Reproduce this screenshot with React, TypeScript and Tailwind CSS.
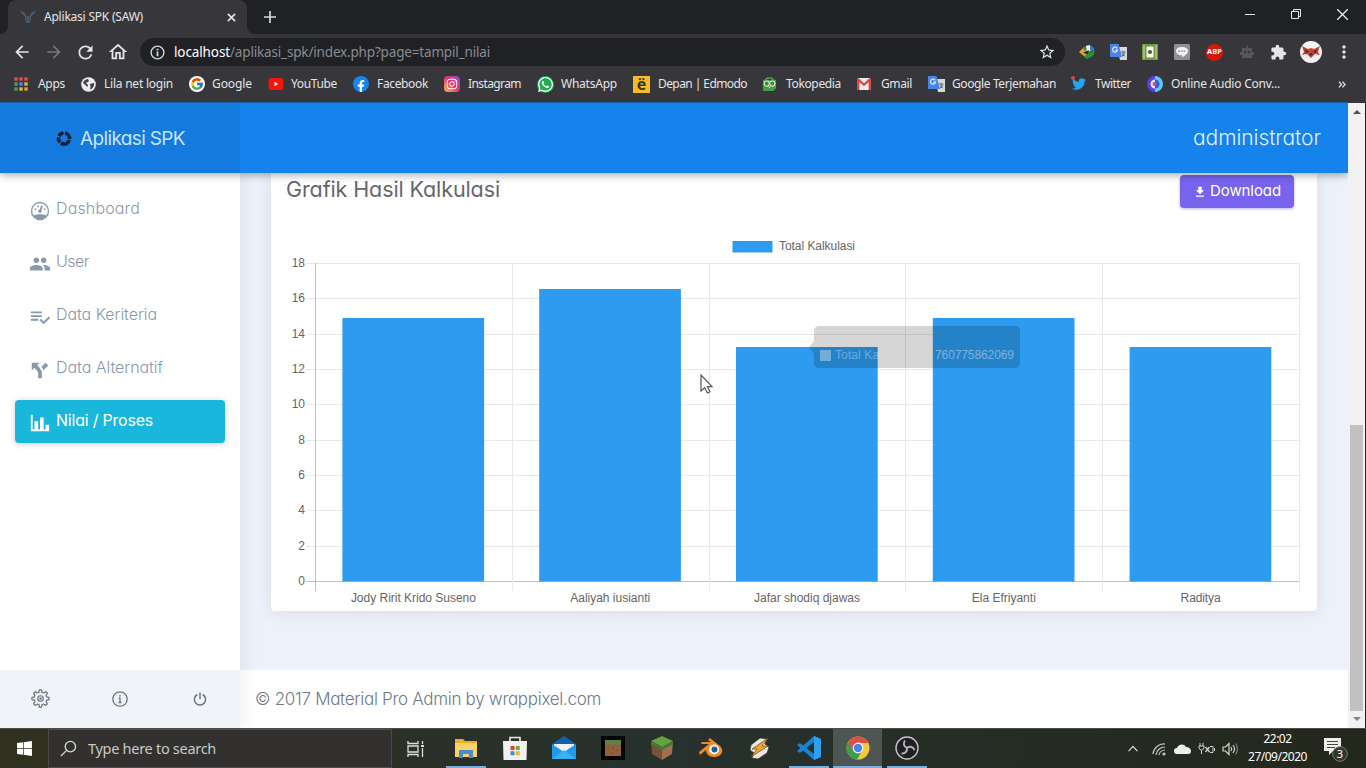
import React, { useLayoutEffect, useRef, useState } from "react";
import { FcGoogle } from "react-icons/fc";
import { FaFacebookF, FaInstagram, FaWhatsapp, FaTwitter, FaWindows } from "react-icons/fa";
import { MdStarBorder, MdArrowBack, MdArrowForward, MdRefresh, MdMoreVert, MdOutlineHome, MdExtension } from "react-icons/md";

const UI = "font-['Noto_Sans','Open_Sans',sans-serif]";
const POP = "font-['Inter',sans-serif] [font-feature-settings:'cv11','ss03']";

/** One line of text whose letter spacing is tuned so it spans `w` pixels. */
function Label({ w, children, className = "" }: { w: number; children: string; className?: string }) {
  const ref = useRef<HTMLSpanElement>(null);
  const [ls, setLs] = useState(0);
  useLayoutEffect(() => {
    if (ref.current) setLs((w - ref.current.getBoundingClientRect().width) / children.length);
  }, [w, children]);
  return (
    <span className={`block shrink-0 ${className}`} style={{ width: w }}>
      <span ref={ref} className="inline-block whitespace-nowrap" style={{ letterSpacing: ls }}>{children}</span>
    </span>
  );
}

function Mdi({ d, className = "" }: { d: string; className?: string }) {
  return (
    <svg viewBox="0 0 24 24" fill="currentColor" className={`shrink-0 ${className}`}>
      <path d={d} />
    </svg>
  );
}

function TranslateIcon() {
  return (
    <svg viewBox="0 0 18 18" className="h-[18px] w-[18px]">
      <path d="M7 4h10v13H10z" fill="#d5d8dc" />
      <path d="M10.500 9h5M13 7.800V9m1.800 0c-.5 2-1.800 3.300-3 4m.5-3c.6 1.500 1.500 2.300 2.500 3" stroke="#6f7680" strokeWidth="1.200" fill="none" />
      <path d="M0 1h8.500l3.500 13H0z" fill="#4a84e8" />
      <path d="M7.200 5.400A2.500 2.500 0 1 0 7.500 7.200H5.200" stroke="#dce8ff" strokeWidth="1.200" fill="none" />
    </svg>
  );
}

function AppsIcon() {
  const c = ["#e0503f", "#e0503f", "#e0503f", "#4a9b5d", "#4b87dc", "#e0b13c", "#4a9b5d", "#e0b13c", "#e0a33c"];
  return (
    <svg viewBox="0 0 14 14" className="h-[14px] w-[14px]">
      {c.map((f, i) => <rect key={i} x={(i % 3) * 5 + 0.3} y={Math.floor(i / 3) * 5 + 0.3} width="3.400" height="3.400" fill={f} />)}
    </svg>
  );
}

const bookmarks: { name: string; w: number; gap: string; icon: React.ReactNode; slot: string }[] = [
  { name: "Apps", w: 27, gap: "mr-[16px]", slot: "w-[24px]", icon: <AppsIcon /> },
  {
    name: "Lila net login", w: 69, gap: "mr-[16px]", slot: "w-[23px]",
    icon: (
      <svg viewBox="0 0 15 15" className="h-[15px] w-[15px]">
        <circle cx="7.500" cy="7.500" r="7.300" fill="#eceef0" />
        <path d="M2 6c1-3 3-4 5-4l1 2-2 1.500H4.500L7 8l-.5 2zM9 7l4-1c.5 3-1.500 6-4 6.500l.5-2.500z" fill="#3c4043" />
      </svg>
    ),
  },
  {
    name: "Google", w: 40, gap: "mr-[16px]", slot: "w-[23px]",
    icon: <span className="flex h-4 w-4 items-center justify-center rounded-full bg-white"><FcGoogle size={14} /></span>,
  },
  {
    name: "YouTube", w: 46, gap: "mr-[16px]", slot: "w-[23px]",
    icon: (
      <svg viewBox="0 0 16 12" className="h-[12px] w-[16px]">
        <rect x=".5" width="15" height="12" rx="3" fill="#f51408" />
        <path d="M6.500 3.700v4.600L10.200 6z" fill="#fff" />
      </svg>
    ),
  },
  {
    name: "Facebook", w: 51, gap: "mr-[16px]", slot: "w-[24px]",
    icon: <span className="flex h-4 w-4 items-end justify-center overflow-hidden rounded-full bg-[#1686ee] text-white"><FaFacebookF size={12} /></span>,
  },
  {
    name: "Instagram", w: 53, gap: "mr-[16px]", slot: "w-[24px]",
    icon: <span className="flex h-4 w-4 items-center justify-center rounded-[4px] bg-gradient-to-tr from-[#fdb04a] via-[#e2336f] to-[#8a3ac8] text-white"><FaInstagram size={12} /></span>,
  },
  {
    name: "WhatsApp", w: 56, gap: "mr-[16px]", slot: "w-[24px]",
    icon: <span className="flex h-[17px] w-[17px] items-center justify-center rounded-full bg-[#1fab50] text-white"><FaWhatsapp size={17} /></span>,
  },
  {
    name: "Depan | Edmodo", w: 89, gap: "mr-[15px]", slot: "w-[25px]",
    icon: <span className="flex h-[17px] w-[17px] items-center justify-center bg-[#f7bd23] text-[16px] leading-none font-bold text-[#3b3420]">ë</span>,
  },
  {
    name: "Tokopedia", w: 55, gap: "mr-[16px]", slot: "w-[24px]",
    icon: (
      <svg viewBox="0 0 16 16" className="h-[15px] w-[15px]">
        <path d="M1 3h14v9l-3 3H1z" fill="#459b46" />
        <path d="M4 3c1-3 7-3 8 0" stroke="#68b85b" strokeWidth="1.200" fill="none" />
        <circle cx="5" cy="7" r="2.800" fill="#3f8c40" stroke="#d6ebce" strokeWidth="1.200" />
        <circle cx="11" cy="7" r="2.800" fill="#3f8c40" stroke="#d6ebce" strokeWidth="1.200" />
        <path d="m6.500 10 1.500 2 1.500-2z" fill="#d6ebce" />
      </svg>
    ),
  },
  {
    name: "Gmail", w: 31, gap: "mr-[16px]", slot: "w-[24px]",
    icon: (
      <svg viewBox="0 0 14 12" className="h-[12px] w-[14px]">
        <path d="M0 0h14v12H0z" fill="#efeded" />
        <path d="M1.200 12V1.500L7 6.800l5.800-5.300V12" stroke="#d9443a" strokeWidth="2.300" fill="none" />
      </svg>
    ),
  },
  { name: "Google Terjemahan", w: 104, gap: "mr-[16px]", slot: "w-[24px]", icon: <TranslateIcon /> },
  {
    name: "Twitter", w: 36, gap: "mr-[16px]", slot: "w-[23px]",
    icon: <span className="relative text-[#2aa3ef]"><FaTwitter size={14} /><span className="absolute -top-[1px] -left-[1px] h-[4px] w-[4px] rounded-full bg-[#cf4660]" /></span>,
  },
  {
    name: "Online Audio Conv...", w: 109, gap: "", slot: "w-[24px]",
    icon: (
      <svg viewBox="0 0 16 16" className="h-[16px] w-[16px]">
        <path d="M8 0a8 8 0 0 0 0 16z" fill="#5b3fe8" />
        <path d="M8 0a8 8 0 0 1 0 16z" fill="#62c6f2" />
        <path d="M8 3.500a4.500 4.500 0 0 0 0 9z" fill="#dfe6ff" />
        <path d="M8 3.500a4.500 4.500 0 0 1 0 9z" fill="#2b5fe0" />
        <circle cx="7.500" cy="8" r="2" fill="#e2476d" />
      </svg>
    ),
  },
];

function Browser() {
  return (
    <div className={`${UI} flex h-[103px] shrink-0 flex-col bg-[#36363b] text-[#e4e5e8]`}>
      <div className="flex h-[34px] bg-[#202125]">
        <div className="flex w-2 items-end bg-[#36363b]"><div className="h-full w-full rounded-br-[8px] bg-[#202125]" /></div>
        <div className="flex w-[239px] items-center rounded-t-[8px] bg-[#36363b] pl-3">
          <svg viewBox="0 0 16 14" className="mr-2 h-[14px] w-4">
            <path d="M0 1c2.500 0 5 1 6 4v8l-1-3V7C4.500 5 1.500 4 0 1zM16 1c-2.500 0-5 1-6 4v8l1-3V7c.5-2 3.500-3 5-6zM6.500 6h3v7h-3z" fill="#4f5966" />
          </svg>
          <Label w={99} className="text-[12px]">Aplikasi SPK (SAW)</Label>
          <svg viewBox="0 0 10 10" className="ml-[84px] h-[9px] w-[9px]"><path d="m1 1 8 8M9 1 1 9" stroke="#e4e5e8" strokeWidth="1.800" /></svg>
        </div>
        <div className="w-2 bg-[#36363b]"><div className="h-full w-full rounded-bl-[8px] bg-[#202125]" /></div>
        <svg viewBox="0 0 12 12" className="mt-[11px] ml-[9px] h-3 w-3"><path d="M6 0v12M0 6h12" stroke="#d8d9dc" strokeWidth="1.700" /></svg>
        <div className="ml-auto flex items-start pt-[9px] pr-[18px]">
          <svg viewBox="0 0 10 10" className="mr-[36px] h-[10px] w-[10px]"><path d="M0 5.500h10" stroke="#e8e8ea" /></svg>
          <svg viewBox="0 0 10 10" className="mr-[36px] h-[10px] w-[10px]"><path d="M.5 2.500h7v7h-7zM2.500 2V.5h7v7H8" stroke="#e8e8ea" fill="none" /></svg>
          <svg viewBox="0 0 10 10" className="h-[11px] w-[11px]"><path d="m0 0 10 10M10 0 0 10" stroke="#e8e8ea" strokeWidth="1.200" /></svg>
        </div>
      </div>
      <div className="flex h-[36px] items-center pl-[12px]">
        <div className="flex w-[128px] items-center">
          <MdArrowBack size={20} className="mr-3" />
          <MdArrowForward size={20} className="mr-[11px] text-[#76777c]" />
          <MdRefresh size={21} className="mr-[11px]" />
          <MdOutlineHome size={22} />
        </div>
        <div className="flex h-[28px] w-[925px] items-center rounded-full bg-[#202125] pr-[9px] pl-[10px]">
          <svg viewBox="0 0 16 16" className="mr-[9px] h-[15px] w-[15px] shrink-0"><circle cx="8" cy="8" r="6.800" stroke="#d5d6d9" strokeWidth="1.500" fill="none" /><path d="M8 7v5M8 4v1.800" stroke="#d5d6d9" strokeWidth="1.900" /></svg>
          <Label w={56} className="text-[13.5px] text-white">localhost</Label>
          <Label w={260} className="text-[13.5px] text-[#8a8b90]">/aplikasi_spk/index.php?page=tampil_nilai</Label>
          <MdStarBorder size={18} className="ml-auto" />
        </div>
        <div className="ml-[13px] flex items-center">
          <svg viewBox="0 0 18 16" className="mr-[14px] h-[16px] w-[18px]">
            <path d="M1 8 6 3l5 5-4 5z" fill="#e2a12c" /><path d="m5 4 4-3 3 2-5 4z" fill="#2c8f3e" /><path d="m8 2 4-1 1 6-4 1z" fill="#f2f5ee" /><path d="m12 1 4 3v4l-4-2z" fill="#2c7bd2" /><path d="m6 13 3-4 8-2-2 5-6 3z" fill="#269436" /><path d="m5 9 6-3-1 4z" fill="#1c1c1c" />
          </svg>
          <span className="mr-[14px]"><TranslateIcon /></span>
          <svg viewBox="0 0 16 16" className="mr-4 h-4 w-4"><path d="M0 0h16v16H0z" fill="#739743" /><path d="M2 1v14M14 1v14" stroke="#c0d990" strokeWidth="1.200" /><rect x="4.500" y="2.500" width="7" height="11" rx="1" fill="#f4f8ee" /><circle cx="8" cy="8" r="2" fill="#39642e" /></svg>
          <svg viewBox="0 0 16 16" className="mr-4 h-4 w-4"><rect width="16" height="16" rx="1.500" fill="#919195" /><path d="M8 3c4 0 6 2 6 4.200 0 2.500-4 4.800-6 6v-2c-4 0-6-2-6-4S4 3 8 3z" fill="#f3f3f4" /><path d="M4 7.200h8" stroke="#8d8d91" strokeWidth="1.300" strokeDasharray="2 .7" /></svg>
          <span className="mr-4 flex h-[17px] w-[17px] items-center justify-center rounded-full bg-[#d71708] text-[7.5px] font-bold text-white">ABP</span>
          <svg viewBox="0 0 16 16" className="mr-[15px] h-4 w-4"><path d="M7.300 1h1.400v3H13v4h2v3h-2v3H3v-3H1V8h2V4h4.300z" fill="#56575c" /><circle cx="6" cy="8" r="1.200" fill="#36363b" /><circle cx="10" cy="8" r="1.200" fill="#36363b" /></svg>
          <MdExtension size={17} className="mr-[13px]" />
          <svg viewBox="0 0 22 22" className="mr-[12px] h-[22px] w-[22px]"><circle cx="11" cy="11" r="11" fill="#f5f2f1" /><path d="m2 5 6 3 3-1 3 1 6-3-2 6 2 3-5-1-4 4-4-4-5 1 2-3z" fill="#c24637" /><path d="m5 8 4 3-3 1zm12 0-4 3 3 1zM9 13l2 2 2-2-2-1z" fill="#4e292a" /></svg>
          <MdMoreVert size={20} />
        </div>
      </div>
      <div className="flex h-[28px] items-center pl-[14px]">
        {bookmarks.map((b) => (
          <div key={b.name} className={`flex shrink-0 items-center ${b.gap}`}>
            <span className={`${b.slot} flex shrink-0`}>{b.icon}</span>
            <Label w={b.w} className="text-[12px]">{b.name}</Label>
          </div>
        ))}
        <svg viewBox="0 0 9 8" className="mr-[20px] ml-auto h-[7px] w-[8px]"><path d="m1 .7 3 3.300-3 3.300M5 .7 8 4 5 7.300" stroke="#e4e5e8" strokeWidth="1.500" fill="none" /></svg>
      </div>
      <div className="mt-auto h-px w-[1348px] bg-[#1a5d9e]" />
    </div>
  );
}

const nav = [
  { name: "Dashboard", w: 84, d: "M12,2A10,10 0 0,0 2,12A10,10 0 0,0 12,22A10,10 0 0,0 22,12A10,10 0 0,0 12,2M12,3.500A8.500,8.500 0 0,1 20.500,12C20.500,14 19.800,15.600 18.800,17C17,16 14.500,15.500 12,15.500C9.500,15.500 7,16 5.200,17C4.200,15.600 3.500,14 3.500,12A8.500,8.500 0 0,1 12,3.500M14,5.890C13.620,5.900 13.260,6.150 13.100,6.540L11.810,9.770L11.710,10C11,10.130 10.410,10.600 10.140,11.260C9.730,12.290 10.230,13.450 11.260,13.860C12.290,14.270 13.450,13.770 13.860,12.740C14.120,12.080 14,11.320 13.570,10.760L13.670,10.500L14.960,7.290L14.970,7.260C15.170,6.750 14.920,6.170 14.410,5.960C14.280,5.910 14.150,5.890 14,5.890M10,6A1,1 0 0,0 9,7A1,1 0 0,0 10,8A1,1 0 0,0 11,7A1,1 0 0,0 10,6M7,9A1,1 0 0,0 6,10A1,1 0 0,0 7,11A1,1 0 0,0 8,10A1,1 0 0,0 7,9M17,9A1,1 0 0,0 16,10A1,1 0 0,0 17,11A1,1 0 0,0 18,10A1,1 0 0,0 17,9Z" },
  { name: "User", w: 33, d: "M16,13C15.710,13 15.380,13 15.030,13.050C16.190,13.890 17,15 17,16.500V19H23V16.500C23,14.170 18.330,13 16,13M8,13C5.670,13 1,14.170 1,16.500V19H15V16.500C15,14.170 10.330,13 8,13M8,11A3,3 0 0,0 11,8A3,3 0 0,0 8,5A3,3 0 0,0 5,8A3,3 0 0,0 8,11M16,11A3,3 0 0,0 19,8A3,3 0 0,0 16,5A3,3 0 0,0 13,8A3,3 0 0,0 16,11Z" },
  { name: "Data Keriteria", w: 101, d: "M14,10H2V12H14V10M14,6H2V8H14V6M2,16H10V14H2V16M21.500,11.500L23,13L16,20L11.500,15.500L13,14L16,17L21.500,11.500Z" },
  { name: "Data Alternatif", w: 107, d: "M3,4V12.500L6,9.500L9,13L10,15V21H14V14L12,10L9,6.500L11.500,4M18,4L13.540,8.470L14,9C14.930,10 15.450,11.210 15.780,12.380L21,7" },
  { name: "Nilai / Proses", w: 97, d: "M22,21H2V3H4V19H6V10H10V19H12V6H16V19H18V14H22V21Z" },
];

function Sidebar() {
  return (
    <aside className="z-[1] flex w-[240px] shrink-0 flex-col bg-white shadow-[1px_0_20px_rgba(0,0,0,0.08)]">
      <nav className="flex flex-1 flex-col gap-[10px] px-[15px] pt-[15px]">
        {nav.map((n, i) => (
          <div key={n.name} className={`flex h-[43px] items-center rounded-[4px] pl-[14px] ${i === 4 ? "bg-[#1ab7dd] text-white shadow-[0_1px_6px_rgba(0,0,0,0.2)]" : "text-[#8b98a9]"}`}>
            <Mdi d={n.d} className="mt-[2px] mr-[2px] h-[22px] w-[22px]" />
            <Label w={n.w} className={`ml-[3px] pb-[3px] text-[16px] leading-[24px] ${i === 4 ? "font-normal" : "font-light"}`}>{n.name}</Label>
          </div>
        ))}
      </nav>
      <div className="flex h-[58px] items-center bg-[#f0f4f8] pb-[2px] text-[#67757f]">
        <div className="flex w-20 justify-center">
          <svg viewBox="0 0 20 20" className="h-[19px] w-[19px]" fill="none" stroke="currentColor" strokeWidth="1.300" strokeLinejoin="round">
            <path d="M8.800 1h2.400l.4 2.600 1.700.6 2.200-1.500 1.800 1.800-1.500 2.200.7 1.700 2.500.4v2.400l-2.500.4-.7 1.700 1.500 2.200-1.800 1.800-2.200-1.500-1.700.6-.4 2.600H8.800l-.4-2.600-1.700-.6-2.200 1.500-1.800-1.800 1.500-2.200-.7-1.700L1 11.200V8.800l2.500-.4.7-1.700-1.500-2.200 1.800-1.800 2.200 1.500 1.700-.6z" />
            <circle cx="10" cy="10" r="2.900" /><circle cx="10" cy="10" r=".6" />
          </svg>
        </div>
        <div className="flex w-20 justify-center pt-[2px]">
          <svg viewBox="0 0 16 16" className="h-[16px] w-[16px]" fill="none" stroke="currentColor" strokeWidth="1.300"><circle cx="8" cy="8" r="7.200" /><path d="M6.800 7H8v4.500M6.500 11.500h3M8 4v1.500" /></svg>
        </div>
        <div className="flex w-20 justify-center pt-[2px]">
          <svg viewBox="0 0 14 14" className="h-[14px] w-[14px]" fill="none" stroke="currentColor" strokeWidth="1.500"><path d="M4.300 2.500a5.600 5.600 0 1 0 5.400 0M7 .5V7" /></svg>
        </div>
      </div>
    </aside>
  );
}

const data = [
  { name: "Jody Ririt Krido Suseno", w: 125, top: 318 },
  { name: "Aaliyah iusianti", w: 80, top: 289 },
  { name: "Jafar shodiq djawas", w: 106, top: 347 },
  { name: "Ela Efriyanti", w: 64, top: 318 },
  { name: "Raditya", w: 40, top: 347 },
];

function Chart() {
  return (
    <svg viewBox="271 212 1046 399" className="block h-[399px] w-[1046px] font-['Liberation_Sans',sans-serif] text-[12px]">
      <rect x="732.500" y="241" width="40" height="11.500" fill="#2c9bf0" />
      <text x="779" y="250" fill="#666" textLength="76">Total Kalkulasi</text>
      {Array.from({ length: 10 }, (_, i) => {
        const y = Math.round(263 + i * 35.35) + 0.5;
        return (
          <g key={i}>
            <path d={`M306 ${y}H1299.500`} stroke={i === 9 ? "#bfbfbf" : "#e8e8e8"} />
            <text x="305" y={y + 3} textAnchor="end" fill="#666">{18 - i * 2}</text>
          </g>
        );
      })}
      {Array.from({ length: 6 }, (_, i) => {
        const x = Math.round(315 + i * 196.8) + 0.5;
        return <path key={i} d={`M${x} 263V591`} stroke={i === 0 ? "#bfbfbf" : "#e8e8e8"} />;
      })}
      {data.map((d, i) => (
        <g key={d.name}>
          <rect x={342.4 + i * 196.8} y={d.top} width="141.700" height={581.500 - d.top} fill="#2c9bf0" />
          <text x={413.4 + i * 196.8 - d.w / 2} y="602" textLength={d.w} fill="#666">{d.name}</text>
        </g>
      ))}
      <g>
        <path d="M820 326h195q5 0 5 5v32q0 5-5 5H819q-5 0-5-5v-9l-5-7 5-6v-10q0-5 6-5z" fill="#000" opacity=".16" />
        <rect x="820" y="350" width="11" height="11" fill="#94bddd" opacity=".7" />
        <text x="835" y="359" fill="#cfe0f0" opacity=".42" textLength="53">Total Kalk</text>
        <text x="935" y="359" fill="#cfe0f0" opacity=".5" textLength="79">760775862069</text>
      </g>
      <path d="M701 375v16l3.700-3.300 2.700 5.300 2.600-1.300-2.600-5H712z" fill="#fff" stroke="#555" strokeWidth="1.200" />
    </svg>
  );
}

function Page() {
  return (
    <div className={`${POP} flex h-[625px] shrink-0`}>
      <div className="flex w-[1348px] flex-col overflow-hidden">
        <header className="relative z-10 flex h-[70px] shrink-0 items-center bg-[#1682ec] shadow-[0_2px_8px_rgba(0,0,0,0.35)]">
          <div className="flex h-full w-[240px] items-center bg-[#157add] pl-[56px]">
            <svg viewBox="0 0 16 16" className="mr-[8px] h-[17px] w-[16px]" fill="none" stroke="#07203a" strokeWidth="3.600">
              <path d="M9 2.600a5.500 5.500 0 0 1 4.500 6M13.200 9.800a5.500 5.500 0 0 1-8.300 2.800M4.100 11.800a5.500 5.500 0 0 1-1.500-5M3 5.600A5.500 5.500 0 0 1 7.500 2.500" />
            </svg>
            <Label w={105} className="pt-[2px] text-[19px] text-[#c6e4ff]">Aplikasi SPK</Label>
          </div>
          <Label w={128} className="mr-[27px] ml-auto text-[21px] font-light text-[#e1f1ff]">administrator</Label>
        </header>
        <div className="flex min-h-0 flex-1">
          <Sidebar />
          <main className="flex flex-1 flex-col bg-[#ecf1fa]">
            <div className="min-h-0 flex-1 pl-[31px]">
              <section className="w-[1046px] rounded-b-[4px] bg-white shadow-[0_1px_15px_rgba(69,65,78,0.12)]">
                <div className="flex h-[39px] items-start justify-between pr-[23px] pl-[15px]">
                  <Label w={214} className="pt-[1px] text-[21.5px] leading-[30px] text-[#65676d]">Grafik Hasil Kalkulasi</Label>
                  <div className="mt-[2px] flex h-[33px] w-[114px] items-center rounded-[4px] bg-[#7763ee] pl-[13px] text-white shadow-[0_1px_3px_rgba(80,60,200,0.4)]">
                    <Mdi d="M5,20H19V18H5M19,9H15V3H9V9H5L12,16L19,9Z" className="mr-[3px] h-[14px] w-[14px]" />
                    <Label w={71} className="text-[15px]">Download</Label>
                  </div>
                </div>
                <Chart />
              </section>
            </div>
            <footer className="flex h-[58px] items-center bg-white pt-px pl-[15px]">
              <Label w={346} className="text-[17px] font-light text-[#6d7a88]">© 2017 Material Pro Admin by wrappixel.com</Label>
            </footer>
          </main>
        </div>
      </div>
      <div className="flex w-[17px] flex-col items-center bg-[#f1f1f1]">
        <svg viewBox="0 0 8 4" className="mt-[7px] h-1 w-2"><path d="M0 4 4 0l4 4z" fill="#505050" /></svg>
        <div className="mt-[311px] h-[286px] w-[13px] bg-[#c1c1c1]" />
        <svg viewBox="0 0 8 4" className="mt-[6px] h-1 w-2"><path d="M0 0h8L4 4z" fill="#858585" /></svg>
      </div>
      <div className="w-px bg-[#222]" />
    </div>
  );
}

const taskIcons: { icon: React.ReactNode; open?: boolean; active?: boolean }[] = [
  { open: true, icon: <svg viewBox="0 0 24 24" className="h-6 w-6"><path d="M1 3h8l2 2h12v16H1z" fill="#e9ad32" /><path d="M1 7h22v14H1z" fill="#fbd364" /><path d="M5 22v-8h14v8h-4v-4H9v4z" fill="#438fd0" /></svg> },
  { icon: <svg viewBox="0 0 24 24" className="h-6 w-6"><path d="M7 6V1.500h10V6" stroke="#e8e8e8" strokeWidth="1.600" fill="none" /><path d="M0 5h24l-.5 19H.5z" fill="#f2f1ef" /><path d="M7.500 10h4v4h-4z" fill="#d8472b" /><path d="M12.700 10h4v4h-4z" fill="#77a832" /><path d="M7.500 15.200h4v4h-4z" fill="#3a92cb" /><path d="M12.700 15.200h4v4h-4z" fill="#efb32f" /></svg> },
  { icon: <svg viewBox="0 0 24 24" className="h-6 w-6"><path d="M0 8 12 0l12 8v4H0z" fill="#1361af" /><path d="M2 8h20v9H2z" fill="#f1f5f8" /><path d="M0 8l12 8 12-8v15H0z" fill="#209be9" /><path d="m0 23 12-9 12 9z" fill="#39b1f5" /></svg> },
  { icon: <svg viewBox="0 0 24 24" className="h-6 w-6"><path d="M0 0h24v24H0z" fill="#050505" /><path d="M4 4h16v16H4z" fill="#93603f" /><path d="M4 4h16v4h-2v1h-3V8h-3v1H9V8H6v1H4z" fill="#638043" /><path d="M6 12h2v2H6zm9 1h2v2h-2zm-5 3h2v2h-2zm1-5h2v2h-2z" fill="#7f5236" /></svg> },
  { icon: <svg viewBox="0 0 24 24" className="h-6 w-6"><path d="m12 0 11 5-11 6L1 5z" fill="#65a341" /><path d="m1 5 11 6v13L2 18z" fill="#79503b" /><path d="m23 5-11 6v13l10-6z" fill="#a07050" /><path d="m1 5 11 6v3l-3-1-2-2-2 0-2-2-2 0zm22 0-11 6v3l3-1 2-2 2 0 2-2 2 0z" fill="#477932" /></svg> },
  { icon: <svg viewBox="0 0 24 22" className="h-[22px] w-6"><path d="m0 15 10-8H2l1-2h9L9 3l2-2 10 8c5 5 1 11-6 11-5 0-8-3-8-7l-6 5z" fill="#ef8a25" /><circle cx="15" cy="12.500" r="5" fill="#fff" /><circle cx="15.500" cy="12.500" r="3" fill="#245b96" /></svg> },
  { icon: <svg viewBox="0 0 24 24" className="h-6 w-6"><path d="m3 9 9-7 7 1-2 5 4 3-2 6-9 6-6-1 2-5-4-3z" fill="#e9e8e2" stroke="#3b3b34" strokeWidth=".8" /><path d="m3 21 6-8H4L20 2l-6 8h6z" fill="#efa332" stroke="#6e4820" strokeWidth=".7" /></svg> },
  { open: true, icon: <svg viewBox="0 0 24 24" className="h-6 w-6"><path d="m17 0 7 3v18l-7 3L0 9l3-2 14 11V6L3 17l-3-2z" fill="#1684d2" /><path d="m17 0 7 3v18l-7 3z" fill="#2d9fec" /></svg> },
  {
    open: true, active: true,
    icon: <svg viewBox="0 0 24 24" className="h-6 w-6"><circle cx="12" cy="12" r="11.500" fill="#f7c83c" /><path d="M12 12 1.700 6.500A11.500 11.500 0 0 0 11 23.500L16.500 14z" fill="#3c9c54" /><path d="M2 6.200a11.500 11.500 0 0 1 20.200.8H12L7 14z" fill="#dc5145" /><circle cx="12" cy="12" r="5.400" fill="#f4f5f6" /><circle cx="12" cy="12" r="4.200" fill="#4c83e9" /></svg>,
  },
  {
    open: true,
    icon: (
      <svg viewBox="0 0 24 24" className="h-6 w-6">
        <circle cx="12" cy="12" r="11" fill="#201f24" stroke="#c4c4c4" strokeWidth="1.400" />
        <g stroke="#b3b2b6" strokeWidth="2" fill="none">
          <path d="M12 12C8.500 10.500 8 7 10 4.500" />
          <path d="M12 12C8.500 10.500 8 7 10 4.500" transform="rotate(120 12 12)" />
          <path d="M12 12C8.500 10.500 8 7 10 4.500" transform="rotate(240 12 12)" />
        </g>
      </svg>
    ),
  },
];

function Taskbar() {
  return (
    <div className={`${UI} flex h-[40px] shrink-0 border-t border-[#4b4d47] bg-gradient-to-r from-[#30301f] via-[#27312d] to-[#24271b] text-white`}>
      <div className="flex w-[48px] items-center justify-center"><FaWindows size={17} /></div>
      <div className="flex w-[344px] items-center border border-[#4d4c47] bg-[#323130] pl-[11px]">
        <svg viewBox="0 0 18 18" className="mr-[11px] h-[17px] w-[17px]" fill="none" stroke="#d6d6d6" strokeWidth="1.400"><circle cx="11" cy="7" r="5.500" /><path d="m7 11-6 6" /></svg>
        <Label w={128} className="text-[14.5px] text-[#c9c9c9]">Type here to search</Label>
      </div>
      <div className="flex w-[49px] items-center justify-center pr-[2px]">
        <svg viewBox="0 0 18 16" className="h-4 w-[18px]" fill="none" stroke="#dedede" strokeWidth="1.300"><path d="M1 0v2.500h10V0M1 16v-2.500h10V16M1 5h10v6H1zM15.500 0v3M15.500 7v9" /><path d="M14 5h3" strokeWidth="2" /></svg>
      </div>
      {taskIcons.map((t, i) => (
        <div key={i} className={`flex w-[49px] flex-col items-center ${t.active ? "bg-[#4d5652]" : ""}`}>
          <div className="flex flex-1 items-center pt-[1px]">{t.icon}</div>
          <div className={`h-[2px] ${t.active ? "w-[49px]" : "w-[40px]"} ${t.open ? "bg-[#76aee2]" : ""}`} />
        </div>
      ))}
      <div className="ml-auto flex items-center pr-[17px]">
        <svg viewBox="0 0 12 8" className="mr-[13px] h-[7px] w-[12px]"><path d="m1 7 5-5.500L11 7" stroke="#ddd" strokeWidth="1.400" fill="none" /></svg>
        <svg viewBox="0 0 14 14" className="mr-[8px] h-[14px] w-[14px]" fill="none" stroke="#c9c9c4" strokeWidth="1.200"><path d="M1 12A11 11 0 0 1 13 2M4 13a9 9 0 0 1 9-8M7 13a6 6 0 0 1 6-5" /><circle cx="12" cy="12" r="1" fill="#ddd" /></svg>
        <svg viewBox="0 0 17 10" className="mr-[7px] h-[10px] w-[17px]"><path d="M3 10a3 3 0 0 1 0-6c1-4 7-5 9-1 3 0 5 2 5 4s-1 3-3 3z" fill="#eee" /></svg>
        <svg viewBox="0 0 17 12" className="mr-[7px] h-[12px] w-[17px]" fill="none" stroke="#cfcfca"><path d="M2 0v3M5 0v3M1 3h5v2L4.500 7h-2L1 5zM3.500 7v4M12 3.500h3v6h-3M16.500 5v3" /><path d="m7.500 4 4 5M11.500 4l-4 5" strokeWidth="1.400" /></svg>
        <svg viewBox="0 0 17 14" className="mr-[9px] h-[14px] w-[17px]" fill="none" stroke="#d5d5d0" strokeWidth="1.200"><path d="M1 5h2.500L7 1.500v11L3.500 9H1z" /><path d="M9 5q1.500 2 0 4M11 3q3 4 0 8" /><path d="M13.500 1.500q4 5.500 0 11" opacity=".5" /></svg>
        <div className="mr-[17px] flex w-[59px] flex-col items-center pb-[2px] text-[12px] leading-[18px]">
          <Label w={28}>22:02</Label>
          <Label w={59}>27/09/2020</Label>
        </div>
        <svg viewBox="0 0 25 26" className="h-[26px] w-[25px]">
          <path d="M0 2h17v13H9l-4 4v-4H0z" fill="#f0f0ed" /><path d="M3 5.500h11M3 8.500h11M3 11.500h8" stroke="#44463c" />
          <circle cx="16" cy="18" r="7.300" fill="#34362e" stroke="#777970" />
          <text x="16" y="22" textAnchor="middle" fontSize="11" fill="#fff">3</text>
        </svg>
      </div>
    </div>
  );
}

export default function App() {
  return (
    <div className="flex h-[768px] w-[1366px] flex-col overflow-hidden">
      <Browser />
      <Page />
      <Taskbar />
    </div>
  );
}
